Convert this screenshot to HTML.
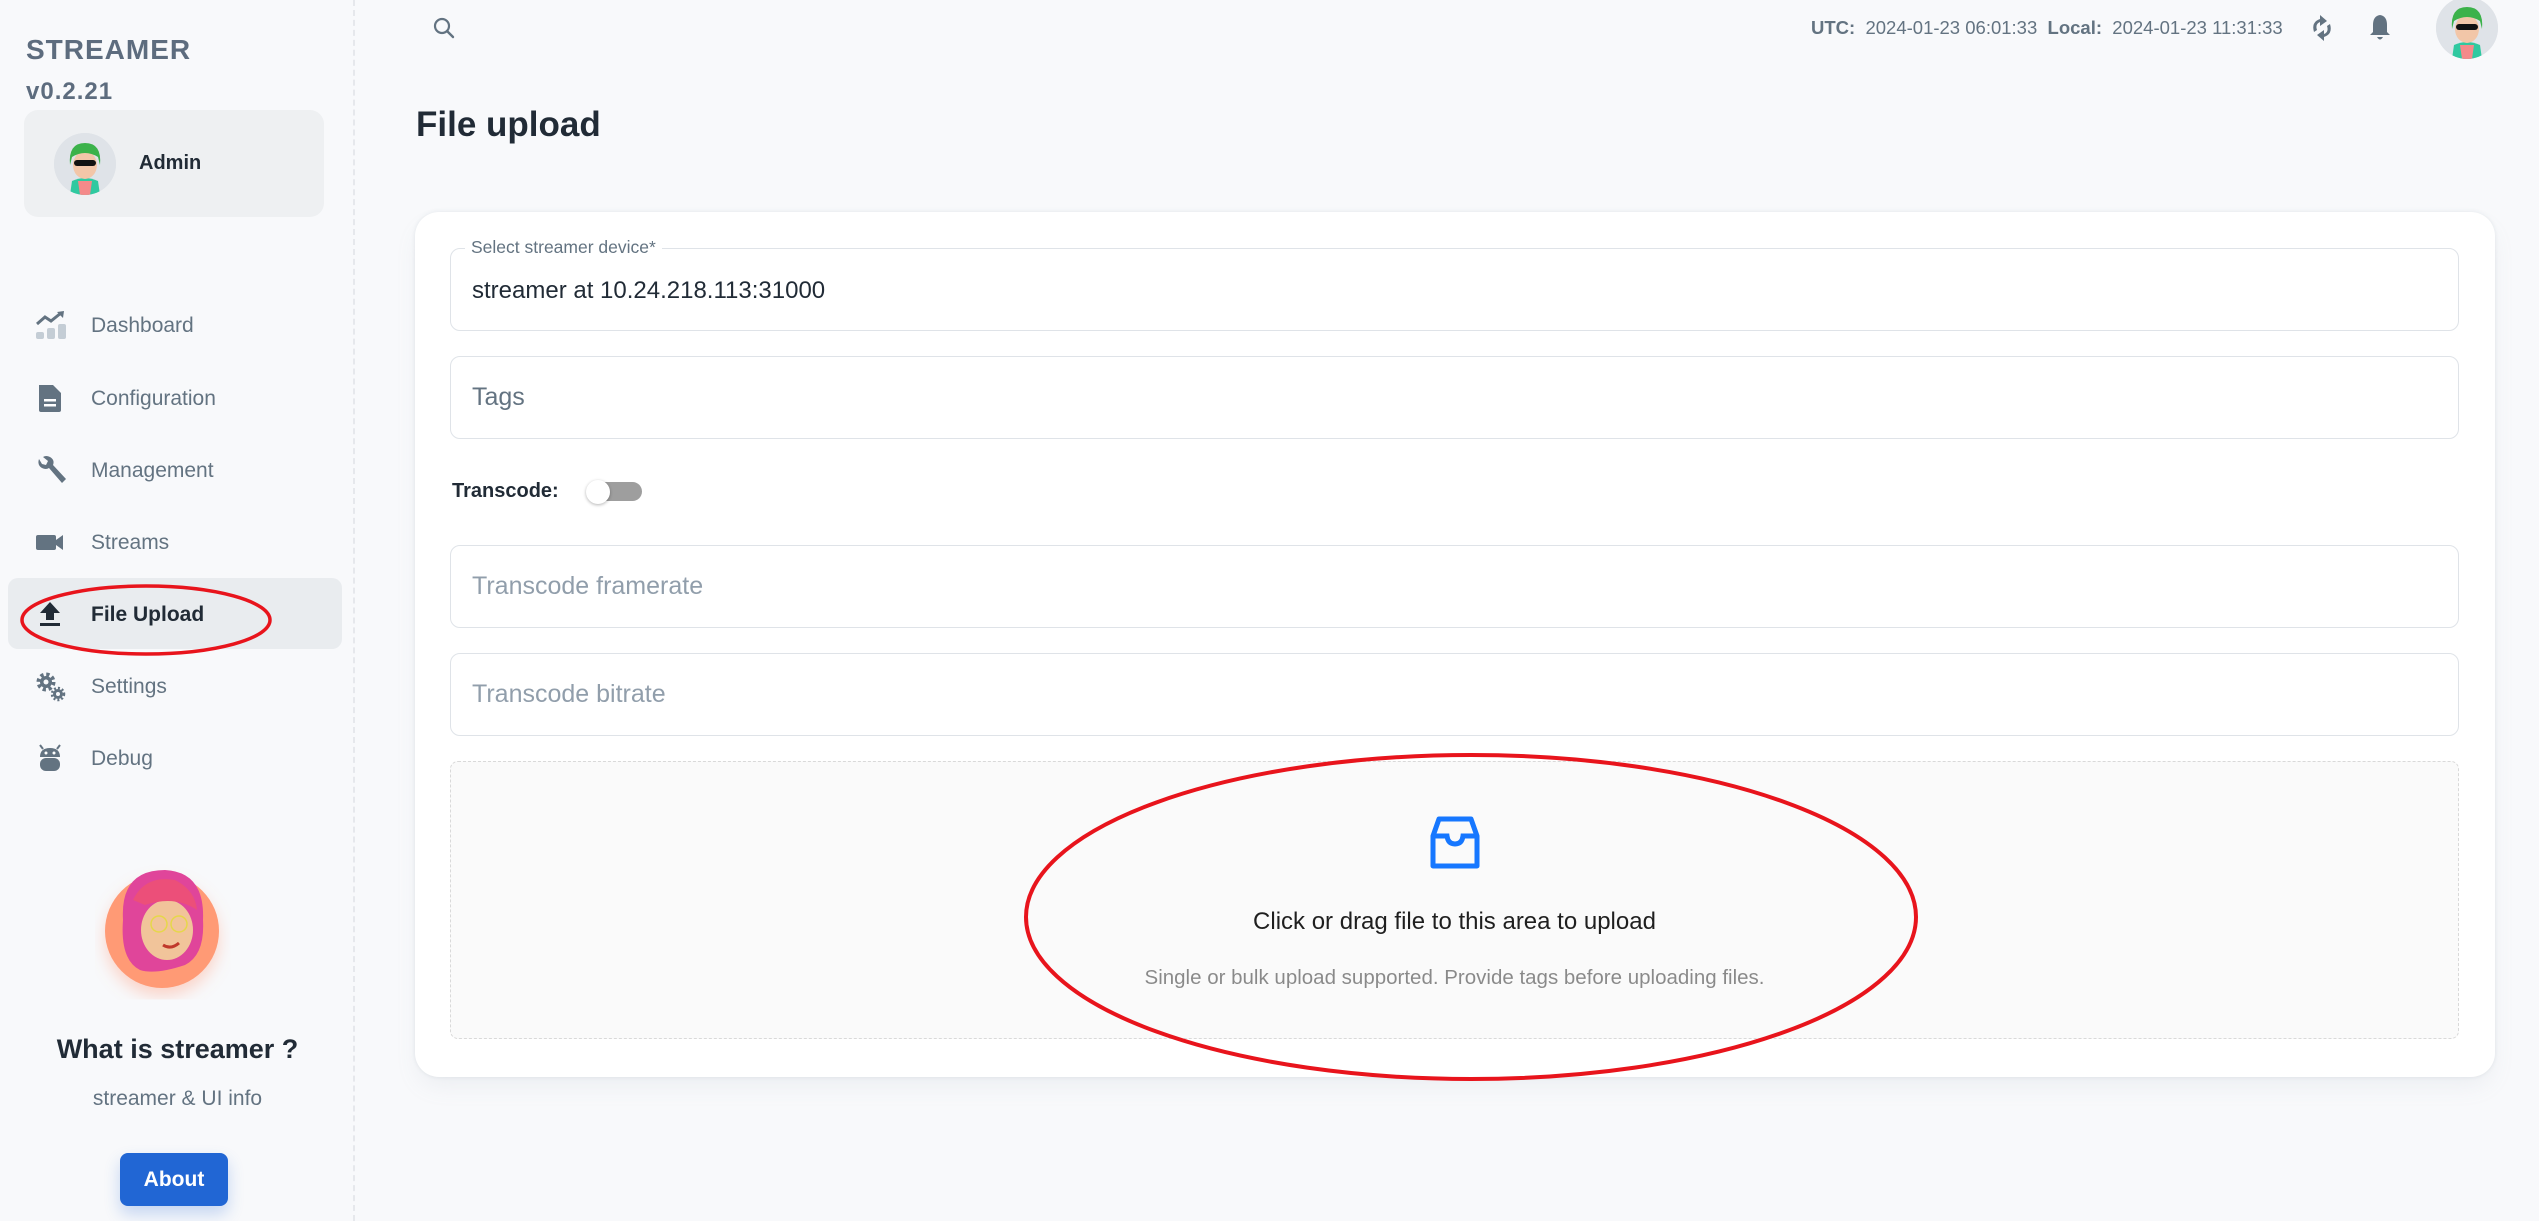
<!DOCTYPE html>
<html><head><meta charset="utf-8">
<style>
*{box-sizing:border-box;margin:0;padding:0}
html,body{width:2539px;height:1221px;overflow:hidden;background:#f8f9fb;font-family:"Liberation Sans",sans-serif}
.side{position:absolute;left:0;top:0;width:355px;height:1221px;border-right:2px dashed #e6e8ec;background:#f8f9fb}
.brand{position:absolute;left:26px;top:34px;font-size:28px;font-weight:bold;color:#5d6c7e;letter-spacing:1px}
.ver{position:absolute;left:26px;top:78px;font-size:24px;font-weight:bold;color:#5d6c7e;letter-spacing:1px}
.acct{position:absolute;left:24px;top:110px;width:300px;height:107px;border-radius:14px;background:#eef0f2}
.av{position:absolute;border-radius:50%;background:#dfe3e8;overflow:hidden}
.acct .name{position:absolute;left:115px;top:42px;font-size:20px;font-weight:bold;color:#212b36}
.nav{position:absolute;left:0;width:355px;height:60px}
.nav svg{position:absolute;left:35px;top:15px}
.nav span{position:absolute;left:91px;top:19px;font-size:21px;color:#637381}
.nav.act{left:8px;width:334px;height:71px;background:#e9ecef;border-radius:10px}
.nav.act svg{left:27px;top:21px}
.nav.act span{left:83px;top:25px;color:#212b36;font-weight:bold}
.card{position:absolute;left:415px;top:212px;width:2080px;height:865px;background:#fff;border-radius:24px;box-shadow:0 0 4px rgba(145,158,171,.2),0 12px 24px -4px rgba(145,158,171,.12)}
.field{position:absolute;left:450px;width:2009px;height:83px;border:1.5px solid #dfe3e8;border-radius:10px;background:#fff}
.field .ph{position:absolute;left:21px;top:26px;font-size:25px;color:#919eab}
</style></head><body>
<div class="side">
 <div class="brand">STREAMER</div>
 <div class="ver">v0.2.21</div>
 <div class="acct">
  <div class="av" style="left:30px;top:23px;width:62px;height:62px">
   <svg width="62" height="62" viewBox="0 0 62 62"><rect width="62" height="62" fill="#dfe3e8"/><path d="M16 62 L18 48 Q31 42 44 48 L46 62Z" fill="#2fc9a0"/><path d="M24 48 L26 62 L36 62 L38 48Z" fill="#f48a8a"/><ellipse cx="31" cy="32" rx="12" ry="14" fill="#f2c6a8"/><path d="M16 32 Q14 10 31 10 Q48 10 46 32 L44 24 Q31 16 18 24Z" fill="#3bb24a"/><rect x="20" y="27" width="22" height="6" rx="3" fill="#111"/></svg>
  </div>
  <div class="name">Admin</div>
 </div>
 <div class="nav" style="top:295px"><svg width="32" height="30" viewBox="0 0 32 30"><path d="M2 14 L10 7 L16 11 L26 3" stroke="#637381" stroke-width="3" fill="none"/><path d="M22 2 L29 1 L28 8Z" fill="#637381"/><rect x="1" y="22" width="8" height="7" rx="2" fill="#c4cdd5"/><rect x="12" y="18" width="8" height="11" rx="2" fill="#c4cdd5"/><rect x="23" y="14" width="8" height="15" rx="2" fill="#c4cdd5"/></svg><span>Dashboard</span></div>
 <div class="nav" style="top:368px"><svg width="30" height="30" viewBox="0 0 30 30"><path d="M4 2 H18 L26 10 V27 Q26 29 24 29 H6 Q4 29 4 27Z" fill="#637381"/><rect x="9" y="16" width="12" height="2.5" fill="#fff"/><rect x="9" y="21" width="12" height="2.5" fill="#fff"/></svg><span>Configuration</span></div>
 <div class="nav" style="top:440px"><svg width="32" height="30" viewBox="0 0 32 30"><path d="M4 4 Q2 10 7 13 Q11 15 14 13 L27 28 L31 24 L18 10 Q20 5 15 2 Q11 0 8 2 L13 6 L11 10 L7 9Z" fill="#637381"/></svg><span>Management</span></div>
 <div class="nav" style="top:512px"><svg width="30" height="30" viewBox="0 0 30 30"><rect x="1" y="8" width="20" height="15" rx="2" fill="#637381"/><path d="M21 13 L28 8 V23 L21 18Z" fill="#637381"/></svg><span>Streams</span></div>
 <div class="nav act" style="top:578px"><svg width="30" height="30" viewBox="0 0 30 30"><path d="M15 3 L25 14 H19 V21 H11 V14 H5Z" fill="#212b36"/><rect x="5" y="24" width="20" height="3" fill="#212b36"/></svg><span>File Upload</span></div>
 <div class="nav" style="top:656px"><svg width="32" height="32" viewBox="0 0 32 32"><circle cx="11" cy="11" r="7" fill="none" stroke="#637381" stroke-width="5" stroke-dasharray="3 2.5"/><circle cx="11" cy="11" r="6" fill="#637381"/><circle cx="11" cy="11" r="2.5" fill="#f8f9fb"/><circle cx="23" cy="23" r="5" fill="#637381"/><circle cx="23" cy="23" r="6" fill="none" stroke="#637381" stroke-width="2.5" stroke-dasharray="2 2"/><circle cx="23" cy="23" r="2" fill="#f8f9fb"/></svg><span>Settings</span></div>
 <div class="nav" style="top:728px"><svg width="30" height="32" viewBox="0 0 30 32"><path d="M5 14 Q5 5 15 5 Q25 5 25 14Z" fill="#637381"/><path d="M8 6 L5 2 M22 6 L25 2" stroke="#637381" stroke-width="2"/><rect x="5" y="15" width="20" height="13" rx="6" fill="#637381"/><circle cx="11" cy="10" r="1.5" fill="#fff"/><circle cx="19" cy="10" r="1.5" fill="#fff"/></svg><span>Debug</span></div>
 <svg style="position:absolute;left:19px;top:583px" width="256" height="76"><ellipse cx="127" cy="37" rx="124" ry="34" fill="none" stroke="#e8141c" stroke-width="3.5"/></svg>
 <svg style="position:absolute;left:95px;top:860px" width="140" height="140" viewBox="0 0 140 140"><defs><filter id="sh"><feDropShadow dx="0" dy="8" stdDeviation="8" flood-color="#ff8a65" flood-opacity=".35"/></filter></defs><circle cx="67" cy="71" r="57" fill="#ff9a75" filter="url(#sh)"/><path d="M28 60 Q25 10 70 10 Q110 12 108 60 Q110 95 90 105 Q60 115 45 110 Q25 100 28 60Z" fill="#e0459a"/><ellipse cx="72" cy="70" rx="26" ry="30" fill="#f1c49a"/><path d="M38 40 Q50 15 80 20 Q100 30 102 50 Q80 35 50 45Z" fill="#ec4f79"/><circle cx="64" cy="64" r="8" fill="none" stroke="#e6d74a" stroke-width="1.5"/><circle cx="84" cy="64" r="8" fill="none" stroke="#e6d74a" stroke-width="1.5"/><path d="M68 85 Q76 90 84 83" stroke="#c0392b" stroke-width="3" fill="none"/></svg>
 <div style="position:absolute;left:0;width:355px;top:1034px;text-align:center;font-size:27px;font-weight:bold;color:#212b36">What is streamer ?</div>
 <div style="position:absolute;left:0;width:355px;top:1087px;text-align:center;font-size:21px;color:#637381">streamer &amp; UI info</div>
 <div style="position:absolute;left:120px;top:1153px;width:108px;height:53px;background:#2166d4;border-radius:8px;color:#fff;font-weight:bold;font-size:21px;text-align:center;line-height:53px;box-shadow:0 8px 16px rgba(33,102,212,.24)">About</div>
</div>

<svg style="position:absolute;left:432px;top:16px" width="24" height="24" viewBox="0 0 24 24"><circle cx="10" cy="10" r="7" fill="none" stroke="#637381" stroke-width="2.2"/><path d="M15 15 L21 21" stroke="#637381" stroke-width="2.4" stroke-linecap="round"/></svg>
<div style="position:absolute;left:1811px;top:17px;font-size:18.5px;color:#637381;white-space:nowrap"><b>UTC:</b>&nbsp; 2024-01-23 06:01:33&nbsp; <b>Local:</b>&nbsp; 2024-01-23 11:31:33</div>
<svg style="position:absolute;left:2308px;top:12px" width="28" height="32" viewBox="0 0 28 32"><path d="M6 20 Q3 10 12 7 L12 3 L19 9 L12 14 L12 10 Q7 12 9 18Z" fill="#637381"/><path d="M22 12 Q25 22 16 25 L16 29 L9 23 L16 18 L16 22 Q21 20 19 14Z" fill="#637381"/></svg>
<svg style="position:absolute;left:2368px;top:13px" width="24" height="30" viewBox="0 0 24 30"><path d="M12 2 Q19 3 19 12 V19 L22 22 H2 L5 19 V12 Q5 3 12 2Z" fill="#637381"/><path d="M9 24 Q12 29 15 24Z" fill="#637381"/></svg>
<div class="av" style="left:2436px;top:-3px;width:62px;height:62px"><svg width="62" height="62" viewBox="0 0 62 62"><rect width="62" height="62" fill="#dfe3e8"/><path d="M16 62 L18 48 Q31 42 44 48 L46 62Z" fill="#2fc9a0"/><path d="M24 48 L26 62 L36 62 L38 48Z" fill="#f48a8a"/><ellipse cx="31" cy="32" rx="12" ry="14" fill="#f2c6a8"/><path d="M16 32 Q14 10 31 10 Q48 10 46 32 L44 24 Q31 16 18 24Z" fill="#3bb24a"/><rect x="20" y="27" width="22" height="6" rx="3" fill="#111"/></svg></div>

<div style="position:absolute;left:416px;top:105px;font-size:35px;font-weight:bold;color:#212b36">File upload</div>

<div class="card"></div>
<div class="field" style="top:248px">
 <div style="position:absolute;left:14px;top:-12px;background:#fff;padding:0 6px;font-size:17.5px;color:#637381">Select streamer device*</div>
 <div style="position:absolute;left:21px;top:28px;font-size:24px;color:#212b36">streamer at 10.24.218.113:31000</div>
</div>
<div class="field" style="top:356px"><div class="ph" style="color:#637381">Tags</div></div>
<div style="position:absolute;left:452px;top:480px;font-size:20px;font-weight:bold;color:#212b36">Transcode:</div>
<div style="position:absolute;left:596px;top:482px;width:46px;height:19px;border-radius:10px;background:#9e9e9e"></div>
<div style="position:absolute;left:586px;top:480px;width:24px;height:24px;border-radius:50%;background:#fff;box-shadow:0 1px 3px rgba(0,0,0,.3)"></div>
<div class="field" style="top:545px"><div class="ph">Transcode framerate</div></div>
<div class="field" style="top:653px"><div class="ph">Transcode bitrate</div></div>
<div style="position:absolute;left:450px;top:761px;width:2009px;height:278px;border:1.5px dashed #d9d9d9;border-radius:8px;background:#fafafa"></div>
<svg style="position:absolute;left:1428px;top:816px" width="54" height="54" viewBox="0 0 54 54"><path d="M5 20 L11 3 H43 L49 20 V50 H5Z" fill="none" stroke="#1677ff" stroke-width="5" stroke-linejoin="round"/><path d="M5 20 H19 Q20 28 27 28 Q34 28 35 20 H49" fill="none" stroke="#1677ff" stroke-width="5"/></svg>
<div style="position:absolute;left:450px;width:2009px;top:908px;text-align:center;font-size:24px;color:rgba(0,0,0,.88)">Click or drag file to this area to upload</div>
<div style="position:absolute;left:450px;width:2009px;top:966px;text-align:center;font-size:20.5px;color:rgba(0,0,0,.45)">Single or bulk upload supported. Provide tags before uploading files.</div>
<svg style="position:absolute;left:1020px;top:750px" width="902" height="335"><ellipse cx="451" cy="167" rx="445" ry="162" fill="none" stroke="#e8141c" stroke-width="4"/></svg>
</body></html>
